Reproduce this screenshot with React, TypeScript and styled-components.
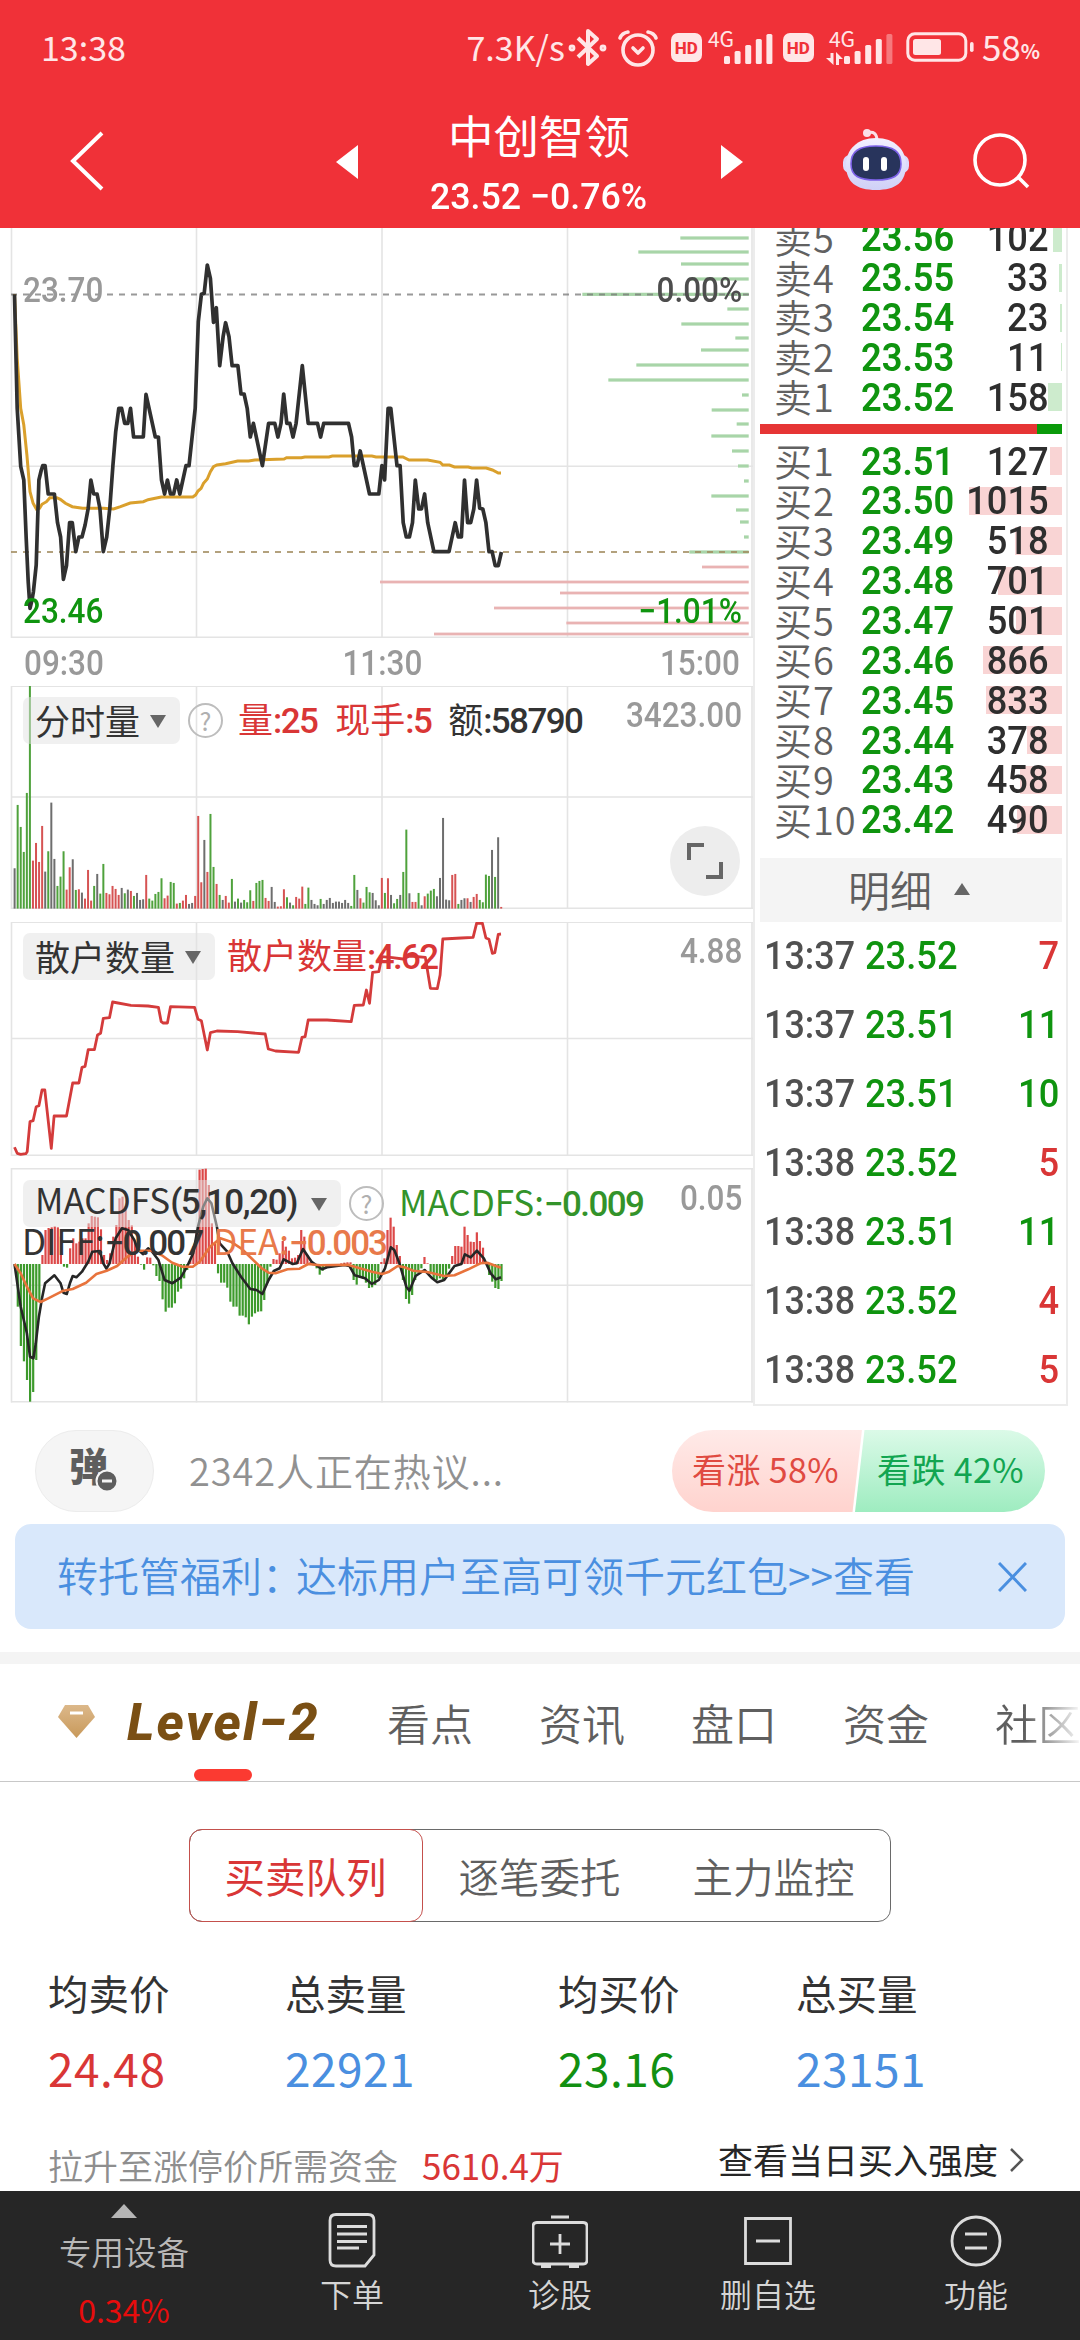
import React from "react";
import styled, { createGlobalStyle } from "styled-components";

const cjk = `"Noto Sans CJK SC", sans-serif`;
const din = `Roboto, "Noto Sans CJK SC", sans-serif`;
const RED = "#d93636";
const GREEN = "#0f940f";
const GRID = "#e4e4e4";

const Global = createGlobalStyle`
  html, body { margin: 0; padding: 0; background: #fff; }
  * { box-sizing: border-box; }
  #root { font-family: ${cjk}; line-height: 1; }
`;

const Page = styled.div`
  width: 1080px;
  height: 2340px;
  display: flex;
  flex-direction: column;
  background: #fff;
  overflow: hidden;
  white-space: nowrap;
`;

const Din = styled.span<{ $size?: number; $color?: string; $weight?: number; $sx?: number; $from?: string }>`
  display: inline-block;
  font-family: ${din};
  font-size: ${(p) => p.$size ?? 35}px;
  font-weight: ${(p) => p.$weight ?? 500};
  color: ${(p) => p.$color ?? "#999"};
  transform: scaleX(${(p) => p.$sx ?? 0.9});
  transform-origin: ${(p) => p.$from ?? "left"} center;
`;

/* ---------- header ---------- */
const Header = styled.header`
  flex: none;
  height: 228px;
  background: #f03138;
  color: #fff;
`;
const StatusBar = styled.div`
  height: 98px;
  padding: 0 40px 0 41px;
  display: flex;
  align-items: center;
  color: #ffe6e7;
  font-size: 34px;
`;
const StatusText = styled.span<{ $ml?: string; $size?: number; $top?: number; $weight?: number }>`
  margin-left: ${(p) => p.$ml ?? "0"};
  margin-top: ${(p) => p.$top ?? -5}px;
  font-size: ${(p) => p.$size ?? 34}px;
  font-weight: ${(p) => p.$weight ?? 400};
`;
const StatusIcon = styled.svg<{ $ml: number }>`
  flex: none;
  margin-left: ${(p) => p.$ml}px;
  overflow: visible;
`;
const Nav = styled.div`
  height: 130px;
  display: grid;
  grid-template-columns: 71px 265px 95px 216px 74px 121px 133px 105px;
`;
const NavCell = styled.div<{ $top: number }>`
  padding-top: ${(p) => p.$top}px;
  svg { display: block; overflow: visible; }
`;
const TitleBlock = styled.div`
  display: flex;
  flex-direction: column;
  align-items: center;
`;
const Title = styled.h1`
  margin: 13px 0 0;
  font-size: 45.5px;
  font-weight: 400;
  line-height: 46px;
`;
const SubTitle = styled.div`
  margin-top: 21px;
`;

function Signal({ faded }: { faded?: boolean }) {
  return (
    <g fill="#ffe6e7">
      {[8, 13, 19, 25, 30].map((h, i) => (
        <rect key={h} x={i * 10.6} y={30 - h} width="6" height={h} rx="1.6" opacity={faded && i === 4 ? 0.4 : 1} />
      ))}
    </g>
  );
}

const HdBadge = styled.span<{ $ml: number }>`
  flex: none;
  margin-left: ${(p) => p.$ml}px;
  width: 31px;
  height: 29px;
  margin-top: -3px;
  border-radius: 7px;
  background: #ffe6e7;
  color: #f03138;
  font: 800 17px/30px Roboto, sans-serif;
  text-align: center;
`;
const Cell = styled.span<{ $ml: number; $w: number }>`
  flex: none;
  display: flex;
  flex-direction: column;
  width: ${(p) => p.$w}px;
  height: 36px;
  margin: -4px 0 0 ${(p) => p.$ml}px;
  font: 400 21px/18px ${cjk};
`;
const CellRow = styled.svg`
  overflow: visible;
  align-self: flex-end;
  margin-top: -13px;
`;

function Status() {
  return (
    <StatusBar>
      <StatusText>13:38</StatusText>
      <StatusText $ml="auto">7.3K/s</StatusText>
      <StatusIcon $ml={4} width="37" height="40" viewBox="0 0 37 40" fill="none" stroke="#ffe6e7" strokeWidth="4" strokeLinejoin="round">
        <path d="M8 10 L27 28 L18 36 V3 L27 11 L8 29" transform="translate(1,-1)" />
        <circle cx="3" cy="19" r="1.4" />
        <circle cx="34" cy="19" r="1.4" />
      </StatusIcon>
      <StatusIcon $ml={12} width="40" height="38" viewBox="0 0 40 38" fill="none" stroke="#ffe6e7" strokeWidth="3.6" strokeLinecap="round" strokeLinejoin="round">
        <circle cx="20" cy="20" r="15" />
        <path d="M2 8 Q4 3 10 2 M38 8 Q36 3 30 2 M15 18 L20 23 L25 18" />
      </StatusIcon>
      <HdBadge $ml={13}>HD</HdBadge>
      <Cell $ml={6} $w={64}>
        4G
        <CellRow width="48" height="30"><Signal /></CellRow>
      </Cell>
      <HdBadge $ml={11}>HD</HdBadge>
      <Cell $ml={15} $w={63}>
        4G
        <CellRow width="48" height="30">
          <g fill="#ffe6e7">
            <path d="M-13.500 19H-10.500V31L-18 24H-13.500ZM-8 31H-5V25H-1L-8 18Z" />
          </g>
          <Signal faded />
        </CellRow>
      </Cell>
      <StatusIcon $ml={14} width="69" height="30" viewBox="0 0 69 30" style={{ marginTop: -4 }}>
        <rect x="1.8" y="1.8" width="58" height="26.4" rx="7" fill="none" stroke="#ffe6e7" strokeWidth="3" />
        <rect x="7" y="7" width="28" height="16" rx="2.5" fill="#ffe6e7" />
        <rect x="64" y="10" width="3.6" height="10" rx="1.8" fill="#ffe6e7" />
      </StatusIcon>
      <StatusText $ml="7px" $top={-7} $size={35}>58</StatusText>
      <StatusText $size={20} $top={3} $weight={700}>%</StatusText>
    </StatusBar>
  );
}

function Robot() {
  return (
    <svg width="68" height="64" viewBox="0 0 68 64">
      <defs>
        <linearGradient id="shell" x1="0" y1="0" x2="0" y2="1">
          <stop offset="0" stopColor="#f3f0ff" />
          <stop offset="1" stopColor="#cfd0f7" />
        </linearGradient>
      </defs>
      <path d="M25 5 Q35 2 35 13" fill="none" stroke="#fbdfe8" strokeWidth="3" />
      <circle cx="25" cy="5" r="4" fill="#fbdfe8" />
      <rect x="1" y="27" width="66" height="18" rx="7" fill="#dcd9fb" />
      <path d="M34 10 C53 10 64 22 64 37 C64 54 54 62 34 62 C14 62 4 54 4 37 C4 22 15 10 34 10Z" fill="url(#shell)" />
      <path d="M34 18 C52 18 59 24 59 36 C59 48 51 52 34 52 C17 52 9 48 9 36 C9 24 16 18 34 18Z" fill="#28345c" stroke="#7d62e8" strokeWidth="1.6" />
      <rect x="21" y="29" width="6" height="14" rx="3" fill="#fff" />
      <rect x="39" y="29" width="6" height="14" rx="3" fill="#fff" />
    </svg>
  );
}

/* ---------- charts ---------- */
const Main = styled.section`
  flex: none;
  height: 1178px;
  display: grid;
  grid-template-columns: 753px 327px;
  overflow: hidden;
`;
const Charts = styled.div`
  display: flex;
  flex-direction: column;
`;
const Panel = styled.div<{ $h: number; $mb?: number }>`
  position: relative;
  flex: none;
  height: ${(p) => p.$h}px;
  margin-bottom: ${(p) => p.$mb ?? 0}px;
`;
const Canvas = styled.svg`
  position: absolute;
  inset: 0;
`;
const Corners = styled.div`
  position: relative;
  height: 100%;
  padding: 45px 11px 9px 23px;
  display: flex;
  flex-direction: column;
  justify-content: space-between;
`;
const Spread = styled.div`
  display: flex;
  justify-content: space-between;
`;
const TimeAxis = styled.div`
  flex: none;
  height: 48px;
  padding: 3px 13px 0 24px;
  display: flex;
  justify-content: space-between;
  align-items: center;
`;
const Legend = styled.div<{ $top: number }>`
  position: relative;
  display: flex;
  align-items: center;
  height: 47px;
  padding: 0 11px 0 23px;
  top: ${(p) => p.$top}px;
`;
const Chip = styled.div<{ $w: number }>`
  flex: none;
  width: ${(p) => p.$w}px;
  height: 47px;
  padding: 0 14px 3px 12px;
  border-radius: 7px;
  background: rgba(226, 226, 226, 0.5);
  display: flex;
  align-items: center;
  justify-content: space-between;
  font-size: 35px;
  color: #333;
`;
const Down = styled.i`
  margin-top: 4px;
  border: 8.5px solid transparent;
  border-top: 13px solid #666;
  border-bottom: 0;
`;
const Help = styled.span`
  flex: none;
  width: 35px;
  height: 35px;
  margin-left: 8px;
  border: 2.5px solid #bdbdbd;
  border-radius: 50%;
  color: #b0b0b0;
  font: 400 25px/30px ${cjk};
  text-align: center;
`;
const Item = styled.span<{ $c: string; $ml: number; $ls?: number; $w?: number }>`
  margin-left: ${(p) => p.$ml}px;
  margin-top: -3px;
  font-family: ${din};
  font-weight: ${(p) => p.$w ?? 500};
  font-size: 35px;
  letter-spacing: ${(p) => p.$ls ?? -1.6}px;
  color: ${(p) => p.$c};
`;
const Cn = styled.span`
  font-family: ${cjk};
  font-weight: 400;
  letter-spacing: 0;
`;
const Max = styled.span`
  margin: -10px 0 0 auto;
`;
const Readout = styled.div`
  position: relative;
  top: 10px;
  padding-left: 22px;
  display: flex;
`;
const Expand = styled.div`
  position: absolute;
  left: 670px;
  top: 140px;
  width: 70px;
  height: 70px;
  border-radius: 50%;
  background: #ededed;
`;

type Pt = [number, number];
const parse = (s: string): Pt[] => s.trim().split(/\s+/).map((p) => p.split(",").map(Number) as Pt);
const path = (s: string, oy: number) =>
  parse(s).map(([x, y]) => `${(x / 2.904).toFixed(1)},${(oy + y / 3).toFixed(1)}`).join(" ");

const price = `42,208 50,550 60,724 69,765 76,940 82,1070 87,1150 93,1125 97,1100 105,1020 113,765 120,735 124,722 131,722 140,807 158,807 167,893 176,936 184,1063 193,1022 202,893 210,893 220,980 229,936 238,936 247,900 256,850 264,765 272,807 282,807 290,850 300,980 310,936 319,850 328,722 336,620 345,550 353,550 362,595 371,595 379,550 388,636 416,636 424,508 451,636 460,636 469,765 478,807 486,765 495,807 504,807 513,765 522,807 540,722 549,722 567,550 576,290 585,208 593,205 602,120 611,160 620,292 628,248 638,422 648,335 655,293 665,335 674,422 691,422 700,507 709,507 718,550 727,636 736,595 762,722 780,595 798,595 807,636 816,595 824,507 833,595 842,595 851,636 860,595 878,422 895,595 922,595 931,636 940,595 1012,595 1021,636 1029,722 1037,722 1046,678 1073,807 1100,807 1109,722 1117,765 1127,550 1135,550 1153,722 1162,722 1171,893 1180,936 1189,936 1198,893 1206,765 1216,852 1224,852 1233,807 1242,893 1260,980 1304,980 1322,893 1331,936 1340,936 1349,765 1358,893 1367,893 1376,852 1384,765 1393,850 1402,852 1411,893 1420,980 1429,980 1438,1022 1447,1022 1456,981`;
const average = `42,208 50,400 60,550 69,600 78,690 87,800 96,835 106,853 115,850 122,838 135,830 145,818 165,818 175,823 190,835 210,845 240,850 300,850 330,852 350,845 378,834 416,830 430,824 468,816 560,816 568,810 575,798 584,790 591,775 602,762 611,740 620,725 630,720 655,716 690,708 722,708 740,705 825,702 832,698 875,698 885,696 955,696 965,693 1080,693 1092,696 1170,696 1188,705 1242,705 1278,712 1286,720 1305,720 1320,726 1360,726 1370,729 1412,729 1430,735 1447,744 1455,744`;
const depthGreen = `961,39 835,81 963,117 988,162 667,208 1102,252 964,297 1126,339 1023,375 829,420 745,465 1146,510 1055,555 1130,597 1054,633 1116,678 1134,723 1152,768 1054,813 1128,855 1140,891 1152,936 988,981`;
const depthRed = `1026,1026 60,1071 600,1104 402,1149 619,1194 222,1227`;
const volume = `K595 G405 G471 G546 G369 G45 R572 R519 R576 R468 K605 G544 K398 K567 G648 G620 G544 R659 R592 K568 G660 R658 K668 R686 R600 R692 G648 K612 G671 G582 R669 R673 R648 R657 R675 K654 G670 K659 R663 G678 K669 K690 K688 R615 G686 G692 G672 G666 G625 R685 R677 G636 G639 R701 G699 R692 R675 K702 K699 R678 R438 R637 K510 R606 G432 G591 R642 G675 K690 R678 R698 G627 K695 G686 K698 G690 G697 G661 R693 G639 G633 G630 R684 R693 K651 K696 R710 R709 R658 G682 K698 G706 R681 R686 R650 G702 G653 K690 K702 K706 G687 K702 K690 K684 K699 K695 K695 K699 K690 K699 G708 G615 K660 R685 G698 G651 G667 K669 K691 K706 R624 G669 R625 K675 G700 G687 K675 G606 G479 K670 R696 R696 G669 K706 R679 G671 G662 G657 K679 K624 K444 K689 K691 R615 R612 G702 K690 K685 R685 K696 R681 R672 G690 G697 G614 G618 K540 G621 K502 R711`.split(" ");
const retail = `42,712 50,730 60,733 75,731 79,725 87,635 96,632 105,590 113,587 122,540 130,540 149,715 157,618 193,618 211,519 229,519 238,472 247,469 256,419 274,419 283,375 292,370 300,325 318,323 327,276 380,286 430,288 460,292 468,335 474,339 486,339 495,290 565,292 575,328 585,332 602,420 611,368 630,363 690,365 770,372 779,417 800,423 867,427 877,382 886,380 895,330 950,330 1020,335 1029,286 1055,285 1064,240 1073,280 1082,187 1100,185 1109,140 1140,143 1170,147 1190,138 1235,142 1250,235 1270,236 1278,195 1286,87 1340,84 1374,82 1384,40 1401,40 1411,84 1420,88 1430,130 1437,128 1447,73 1455,72`;
const macd = `1062 1190 1308 1354 1410 1475 1446 1350 1175 1035 960 954 952 949 952 980 1070 1073 1015 985 1000 995 985 985 940 918 920 922 958 1035 1050 1030 980 945 865 860 890 930 946 995 1040 1064 1079 1042 1043 1066 1098 1113 1168 1205 1193 1193 1180 1145 1136 1105 1080 1048 1008 960 779 777 776 825 940 1000 1090 1118 1118 1133 1175 1190 1190 1217 1217 1222 1243 1220 1210 1205 1204 1170 1118 1070 1047 1049 1030 993 1010 1022 1045 1043 1035 960 980 1035 1056 1066 1075 1094 1082 1075 1072 1066 1066 1064 1060 1058 1057 1057 1110 1124 1102 1106 1118 1134 1132 1125 1105 1056 1045 960 923 950 1005 1038 1110 1167 1181 1155 1110 1088 1075 1041 1060 1090 1108 1110 1105 1108 1095 1076 1038 1008 1008 1010 950 975 995 996 967 993 1013 1058 1095 1115 1134 1137 1113`.split(" ").map(Number);
const diff = `42,1062 60,1190 78,1270 87,1340 97,1345 104,1300 113,1220 122,1165 131,1120 158,1096 176,1120 184,1148 194,1152 203,1120 211,1098 222,1102 238,1085 256,1055 268,1025 290,1023 300,1060 309,1076 318,1060 336,985 354,955 372,960 390,990 400,1018 415,1032 430,1015 442,1025 460,1050 478,1110 500,1120 525,1103 543,1070 561,1030 575,950 590,890 602,865 614,880 630,950 638,1000 660,1025 675,1060 700,1100 727,1137 745,1140 762,1152 780,1110 795,1083 812,1075 824,1048 850,1062 862,1060 880,1017 895,1040 905,1055 935,1078 950,1072 1000,1065 1015,1068 1030,1096 1060,1105 1080,1122 1100,1110 1118,1075 1135,1012 1145,1020 1160,1060 1180,1130 1189,1142 1207,1098 1233,1080 1255,1105 1270,1117 1290,1110 1320,1068 1340,1062 1350,1033 1367,1042 1385,1022 1405,1045 1425,1090 1440,1108 1455,1102`;
const dea = `42,1062 60,1090 78,1130 96,1165 118,1176 140,1165 184,1142 211,1137 250,1118 280,1092 310,1082 340,1068 370,1040 400,1022 440,1022 470,1036 500,1058 530,1070 560,1070 580,1055 610,1010 640,985 670,995 700,1015 730,1045 760,1075 780,1088 800,1090 835,1078 870,1076 895,1062 930,1066 1010,1064 1040,1073 1080,1085 1110,1092 1130,1085 1155,1068 1175,1072 1200,1082 1240,1086 1290,1098 1320,1096 1360,1078 1395,1060 1415,1058 1440,1068 1455,1073`;
const tone: Record<string, string> = { K: "#6e6e6e", G: "#4fa23c", R: "#d65353" };

function Grid({ top, bottom, mid, open }: { top: number; bottom: number; mid: number; open?: boolean }) {
  return (
    <g stroke={GRID} strokeWidth="1.6" fill="none">
      {[11.5, 196.5, 382, 567.5, 752].map((x) => (
        <path key={x} d={`M${x} ${top}V${bottom}`} />
      ))}
      {!open && <path d={`M11 ${top + 0.8}H753`} />}
      <path d={`M11 ${mid}H753M11 ${bottom - 0.8}H753`} />
    </g>
  );
}

function PricePanel() {
  return (
    <Panel $h={410}>
      <Canvas width="753" height="410" viewBox="0 228 753 410">
        <Grid top={228} bottom={638} mid={466.3} open />
        {parse(depthGreen).map(([x, y]) => (
          <rect key={y} x={360 + x / 3} y={223.4 + y / 3} width={388.7 - x / 3} height="3.2" fill="#a8d5a8" />
        ))}
        {parse(depthRed).map(([x, y]) => (
          <rect key={y} x={360 + x / 3} y={223.6 + y / 3} width={388.7 - x / 3} height="2.8" fill="#e9b3b3" />
        ))}
        <path d="M11 294.5H749" stroke="#777" strokeOpacity="0.75" strokeWidth="1.8" strokeDasharray="6 6" />
        <path d="M11 552H749" stroke="#a08a5c" strokeOpacity="0.8" strokeWidth="1.8" strokeDasharray="6 6" />
        <polyline points={path(average, 225)} fill="none" stroke="#daa02c" strokeWidth="3" />
        <polyline points={path(price, 225)} fill="none" stroke="#303030" strokeWidth="3.7" strokeLinejoin="round" />
      </Canvas>
      <Corners>
        <Spread>
          <Din>23.70</Din>
          <Din $color="#4d4d4d" $from="right">0.00%</Din>
        </Spread>
        <Spread>
          <Din $color={GREEN}>23.46</Din>
          <Din $color={GREEN} $from="right">−1.01%</Din>
        </Spread>
      </Corners>
    </Panel>
  );
}

function VolumePanel() {
  const pitch = 486.6 / (volume.length - 1);
  return (
    <Panel $h={223} $mb={13}>
      <Canvas width="753" height="223" viewBox="0 686 753 223">
        <Grid top={685.5} bottom={909} mid={797} />
        {volume.map((b, i) => {
          const h = (716 - Number(b.slice(1))) / 3;
          return <rect key={i} x={13.6 + i * pitch} y={908.6 - h} width="2" height={h} fill={tone[b[0]]} />;
        })}
      </Canvas>
      <Legend $top={11}>
        <Chip $w={157}>分时量<Down /></Chip>
        <Help>?</Help>
        <Item $c={RED} $ml={15}><Cn>量</Cn>:25</Item>
        <Item $c={RED} $ml={18}><Cn>现手</Cn>:5</Item>
        <Item $c="#333" $ml={17}><Cn>额</Cn>:58790</Item>
        <Max><Din $from="right">3423.00</Din></Max>
      </Legend>
      <Expand>
        <svg width="70" height="70" fill="none" stroke="#666" strokeWidth="4">
          <path d="M19 34V19H34M51 36V51H36" />
        </svg>
      </Expand>
    </Panel>
  );
}

function RetailPanel() {
  return (
    <Panel $h={234} $mb={12}>
      <Canvas width="753" height="234" viewBox="0 922 753 234">
        <Grid top={921.5} bottom={1156} mid={1038.5} />
        <polyline points={path(retail, 910)} fill="none" stroke="#d43b3b" strokeWidth="2.8" strokeLinejoin="round" />
      </Canvas>
      <Legend $top={11}>
        <Chip $w={192}>散户数量<Down /></Chip>
        <Item $c={RED} $ml={12}><Cn>散户数量</Cn>:4.62</Item>
        <Max><Din $from="right">4.88</Din></Max>
      </Legend>
    </Panel>
  );
}

function MacdPanel() {
  const pitch = 486.8 / (macd.length - 1);
  return (
    <Panel $h={234}>
      <Canvas width="753" height="235" viewBox="0 1168 753 235">
        <Grid top={1168} bottom={1402.5} mid={1285.3} />
        {macd.map((v, i) => {
          const up = v < 1062;
          const h = Math.abs(v - 1062) / 3;
          return <rect key={i} x={13.6 + i * pitch} y={up ? 1264 - h : 1264} width="2.2" height={h} fill={up ? "#dc4848" : "#3d9a2c"} />;
        })}
        <polyline points={path(diff, 910)} fill="none" stroke="#262626" strokeWidth="2.6" strokeLinejoin="round" />
        <polyline points={path(dea, 910)} fill="none" stroke="#e8733c" strokeWidth="2.6" strokeLinejoin="round" />
      </Canvas>
      <Legend $top={12}>
        <Chip $w={318}>
          <Item $c="#333" $ml={0} $ls={-1.4}><Cn>MACDFS</Cn>(5,10,20)</Item>
          <Down />
        </Chip>
        <Help>?</Help>
        <Item $c="#33932a" $ml={15}><Cn>MACDFS:</Cn>−0.009</Item>
        <Max><Din $from="right">0.05</Din></Max>
      </Legend>
      <Readout>
        <Item $c="#333" $ml={0} $ls={-1.9}><Cn>DIFF:</Cn>−0.007</Item>
        <Item $c="#e8794a" $ml={11} $ls={-2}><Cn>DEA:</Cn>−0.003</Item>
      </Readout>
    </Panel>
  );
}

/* ---------- order book ---------- */
const Book = styled.aside`
  width: 315px;
  height: 1178px;
  padding: 0 4px 0 5px;
  border: solid #ececec;
  border-width: 0 2px 2px 2px;
  display: flex;
  flex-direction: column;
  overflow: hidden;
`;
const Level = styled.div`
  position: relative;
  flex: none;
  height: 39.85px;
  display: grid;
  grid-template-columns: 86px 100px 1fr;
  align-items: center;
  padding: 0 14px 0 14px;
`;
const LevelName = styled.span`
  position: relative;
  top: -2px;
  font-size: 38px;
  font-weight: 350;
  letter-spacing: 0.9px;
  color: #616161;
`;
const Price = styled.span`
  padding-left: 1px;
`;
const Qty = styled.span`
  position: relative;
  text-align: right;
`;
const DepthBar = styled.i<{ $c: string }>`
  position: absolute;
  right: 0;
  top: 5px;
  height: 28px;
  background: ${(p) => p.$c};
`;
const Ratio = styled.div`
  flex: none;
  height: 10.5px;
  margin: 5.7px 0 8px;
  display: flex;
  background: #0a9a0a;
`;
const RatioRed = styled.div`
  width: 277px;
  background: #e63535;
`;
const DetailHead = styled.div`
  flex: none;
  height: 64px;
  margin: 17px 0 0;
  background: #f4f4f4;
  display: flex;
  align-items: center;
  padding: 0 0 2px 88px;
  font-size: 42px;
  font-weight: 350;
  color: #5f5f5f;
`;
const Up = styled.i<{ $c: string; $w: number; $h: number }>`
  width: 0;
  height: 0;
  border: ${(p) => p.$w}px solid transparent;
  border-top: 0;
  border-bottom: ${(p) => p.$h}px solid ${(p) => p.$c};
`;
const Tick = styled.div`
  flex: none;
  height: 69.05px;
  padding: 0 3px 0 4px;
  display: grid;
  grid-template-columns: 101px 100px 1fr;
  align-items: center;
`;

const asks: [string, string, number][] = [
  ["卖5", "23.56", 102], ["卖4", "23.55", 33], ["卖3", "23.54", 23], ["卖2", "23.53", 11], ["卖1", "23.52", 158],
];
const bids: [string, string, number][] = [
  ["买1", "23.51", 127], ["买2", "23.50", 1015], ["买3", "23.49", 518], ["买4", "23.48", 701], ["买5", "23.47", 501],
  ["买6", "23.46", 866], ["买7", "23.45", 833], ["买8", "23.44", 378], ["买9", "23.43", 458], ["买10", "23.42", 490],
];
const ticks: [string, string, number, string][] = [
  ["13:37", "23.52", 7, RED], ["13:37", "23.51", 11, GREEN], ["13:37", "23.51", 10, GREEN], ["13:38", "23.52", 5, RED],
  ["13:38", "23.51", 11, GREEN], ["13:38", "23.52", 4, RED], ["13:38", "23.52", 5, RED],
];

function LevelRow({ row, bar }: { row: [string, string, number]; bar: string }) {
  return (
    <Level>
      <DepthBar $c={bar} style={{ width: row[2] * 0.0917 }} />
      <LevelName>{row[0]}</LevelName>
      <Price><Din $size={39} $color={GREEN} $sx={0.93} $weight={600}>{row[1]}</Din></Price>
      <Qty><Din $size={39} $color="#2e2e2e" $sx={0.93} $from="right">{row[2]}</Din></Qty>
    </Level>
  );
}

const BookInner = styled.div`
  display: flex;
  flex-direction: column;
  margin-top: -9.2px;
`;

function OrderBook() {
  return (
    <Book>
      <BookInner>
        {asks.map((r) => <LevelRow key={r[0]} row={r} bar="#cdebcd" />)}
        <Ratio><RatioRed /></Ratio>
        {bids.map((r) => <LevelRow key={r[0]} row={r} bar="#f9d4d4" />)}
        <DetailHead>明细<Up $c="#666" $w={8.5} $h={12} style={{ marginLeft: 22 }} /></DetailHead>
        {ticks.map(([t, p, v, c], i) => (
          <Tick key={i}>
            <Din $size={39} $color="#505050" $sx={0.92}>{t}</Din>
            <Din $size={39} $color={GREEN} $sx={0.93}>{p}</Din>
            <Qty><Din $size={39} $color={c} $sx={0.93} $from="right">{v}</Din></Qty>
          </Tick>
        ))}
      </BookInner>
    </Book>
  );
}

/* ---------- chat and banner ---------- */
const ChatRow = styled.div`
  flex: none;
  height: 118px;
  padding: 24px 35px 12px;
  display: flex;
  align-items: center;
`;
const Bullet = styled.div`
  position: relative;
  width: 119px;
  height: 82px;
  border-radius: 41px;
  border: 1px solid #ececec;
  background: #f5f5f5;
  padding: 14px 0 0 33px;
  font-size: 39px;
  font-weight: 900;
  color: #5e5e5e;
  svg { position: absolute; left: 59px; top: 38px; }
`;
const Talk = styled.span`
  margin: -3px auto 0 35px;
  font-size: 38px;
  font-weight: 350;
  letter-spacing: 0.9px;
  color: #919191;
`;
const Vote = styled.div<{ $up?: boolean }>`
  width: 190px;
  height: 82px;
  margin-left: ${(p) => (p.$up ? 0 : -7)}px;
  padding: ${(p) => (p.$up ? "0 0 4px 20px" : "0 0 4px 22px")};
  display: flex;
  align-items: center;
  font-size: 34px;
  letter-spacing: 0.4px;
  color: ${(p) => (p.$up ? "#e04a41" : "#12a551")};
  background: ${(p) => (p.$up ? "linear-gradient(#ffeae8, #ffd3ce)" : "linear-gradient(#dbfae8, #9eecc0)")};
  border-radius: ${(p) => (p.$up ? "41px 0 0 41px" : "0 41px 41px 0")};
  clip-path: ${(p) => (p.$up ? "polygon(0 0, 100% 0, 95% 100%, 0 100%)" : "polygon(5% 0, 100% 0, 100% 100%, 0 100%)")};
`;
const Banner = styled.div`
  flex: none;
  height: 105px;
  margin: 0 15px 23px;
  padding: 0 38px 4px 42px;
  border-radius: 16px;
  background: #d9e8fb;
  display: flex;
  align-items: center;
  justify-content: space-between;
  font-size: 41px;
  font-weight: 350;
  color: #4a8fe0;
`;
const Colon = styled.span`
  letter-spacing: -7px;
`;
const Divider = styled.div`
  flex: none;
  height: 12px;
  background: #f4f4f4;
`;

/* ---------- tabs ---------- */
const Tabs = styled.nav`
  flex: none;
  position: relative;
  height: 118px;
  border-bottom: 1.5px solid #c8c8c8;
  display: flex;
  align-items: center;
  padding-left: 57px;
`;
const Gem = styled.svg`
  flex: none;
  margin-top: -3px;
`;
const LevelTab = styled.div`
  flex: none;
  width: 260px;
  margin-left: 31px;
  font: italic 800 52px/60px Roboto, sans-serif;
  letter-spacing: 2.2px;
  color: #7a4f14;
`;
const Indicator = styled.i`
  position: absolute;
  left: 194px;
  bottom: 0;
  width: 58px;
  height: 12px;
  border-radius: 6px;
  background: #fb3a31;
`;
const Tab = styled.div<{ $fade?: boolean }>`
  flex: none;
  width: 152px;
  margin-top: -2px;
  line-height: 60px;
  font-size: 43px;
  font-weight: 350;
  color: #5f5f5f;
  ${(p) => p.$fade && "background: linear-gradient(90deg, #5f5f5f 30px, #fff 88px); background-clip: text; -webkit-background-clip: text; color: transparent;"}
`;
const Segments = styled.div`
  flex: none;
  width: 702px;
  height: 93px;
  margin: 47px auto 0 189px;
  border: 1.5px solid #6a6a6a;
  border-radius: 13px;
  display: flex;
`;
const Segment = styled.div<{ $on?: boolean }>`
  flex: none;
  width: 234px;
  height: 93px;
  margin: -1.5px 0 0 ${(p) => (p.$on ? -1.5 : 0)}px;
  border: 1.5px solid ${(p) => (p.$on ? "#c4504c" : "transparent")};
  border-radius: 13px;
  text-align: center;
  font-size: 40.5px;
  font-weight: ${(p) => (p.$on ? 400 : 350)};
  line-height: 91px;
  color: ${(p) => (p.$on ? RED : "#5f5f5f")};
`;

/* ---------- statistics ---------- */
const Stats = styled.div`
  flex: none;
  display: grid;
  grid-template-columns: 237px 273px 238px 1fr;
  padding: 51px 0 0 48px;
`;
const StatName = styled.div`
  font-size: 40.5px;
  color: #333;
`;
const StatValue = styled.div<{ $c: string }>`
  margin-top: 30px;
  font-size: 46px;
  letter-spacing: 0.5px;
  color: ${(p) => p.$c};
`;
const Funds = styled.div`
  flex: 1;
  display: flex;
  align-items: flex-start;
  padding: 57px 56px 0 48px;
  font-size: 35px;
  font-weight: 350;
  color: #8e8e8e;
`;
const FundsValue = styled.span`
  margin-left: 24px;
  font-weight: 400;
  color: ${RED};
`;
const More = styled.span`
  margin: -6px 0 0 auto;
  display: flex;
  align-items: center;
  gap: 11px;
  font-weight: 400;
  color: #262626;
`;

/* ---------- bottom bar ---------- */
const Bottom = styled.footer`
  flex: none;
  height: 149px;
  background: #262626;
  display: grid;
  grid-template-columns: 248px repeat(4, 208px);
  color: #c9c9c9;
  font-size: 32px;
`;
const Sector = styled.div`
  display: flex;
  flex-direction: column;
  align-items: center;
  padding-top: 13px;
`;
const SectorName = styled.span`
  margin-top: 17px;
  color: #b8b8b8;
  font-weight: 350;
  font-size: 32.5px;
`;
const SectorRate = styled.span`
  margin-top: 25px;
  color: #e80c0c;
`;
const Action = styled.div`
  display: flex;
  flex-direction: column;
  align-items: center;
  padding-top: 22px;
  span { margin-top: 8px; font-weight: 350; color: #d5d5d5; }
`;

const actions = [
  { name: "下单", icon: <path d="M11 3.5H43Q49 3.5 49 9.500V44L40 55H11Q5 55 5 49V9.500Q5 3.500 11 3.500ZM12 15.500H42M12 23H42M12 30.500H42M12 37H34" transform="translate(1,-2)" /> },
  { name: "诊股", icon: <path d="M19 4H37M5 9.500H51Q55 9.500 55 13.500V47Q55 51 51 51H5Q1 51 1 47V13.500Q1 9.500 5 9.500ZM28 21V41M18 31H38M9 53.500H19M37 53.500H47" /> },
  { name: "删自选", icon: <path d="M5.500 5.500H50.500V50.500H5.500ZM16 28H40" /> },
  { name: "功能", icon: <g><circle cx="28" cy="28" r="24" /><path d="M17 21H39M17 35H39" /></g> },
];

const stats = [
  ["均卖价", "24.48", RED], ["总卖量", "22921", "#4a8fe0"], ["均买价", "23.16", "#129012"], ["总买量", "23151", "#4a8fe0"],
];

export default function App() {
  return (
    <Page>
      <Global />
      <Header>
        <Status />
        <Nav>
          <i />
          <NavCell $top={34}>
            <svg width="33" height="58" fill="none" stroke="#fff" strokeWidth="4"><path d="M31 1L2 29L31 57" /></svg>
          </NavCell>
          <NavCell $top={47}>
            <svg width="22" height="34" fill="#fff"><path d="M22 0V34L0 17Z" /></svg>
          </NavCell>
          <TitleBlock>
            <Title>中创智领</Title>
            <SubTitle><Din $size={37} $color="#fff" $sx={0.965} $from="center">23.52 −0.76%</Din></SubTitle>
          </TitleBlock>
          <i />
          <NavCell $top={47}>
            <svg width="22" height="34" fill="#fff"><path d="M0 0V34L22 17Z" /></svg>
          </NavCell>
          <NavCell $top={30}><Robot /></NavCell>
          <NavCell $top={36}>
            <svg width="56" height="56" fill="none" stroke="#fff" strokeWidth="3.6"><circle cx="25" cy="26" r="25" /><path d="M43 43L53 53" /></svg>
          </NavCell>
        </Nav>
      </Header>

      <Main>
        <Charts>
          <PricePanel />
          <TimeAxis>
            {["09:30", "11:30", "15:00"].map((t, i) => (
              <Din key={t} $from={["left", "center", "right"][i]}>{t}</Din>
            ))}
          </TimeAxis>
          <VolumePanel />
          <RetailPanel />
          <MacdPanel />
        </Charts>
        <OrderBook />
      </Main>

      <ChatRow>
        <Bullet>
          弹
          <svg width="24" height="24"><circle cx="12" cy="12" r="10.500" fill="#5e5e5e" stroke="#f5f5f5" strokeWidth="2" /><path d="M7 12H17" stroke="#f5f5f5" strokeWidth="3" /></svg>
        </Bullet>
        <Talk>2342人正在热议...</Talk>
        <Vote $up>看涨 58%</Vote>
        <Vote>看跌 42%</Vote>
      </ChatRow>
      <Banner>
        <span>转托管福利<Colon>：</Colon>达标用户至高可领千元红包&gt;&gt;查看</span>
        <svg width="29" height="30" fill="none" stroke="#4a8fe0" strokeWidth="3" style={{ marginTop: 4 }}><path d="M1 1L28 29M28 1L1 29" /></svg>
      </Banner>
      <Divider />

      <Tabs>
        <Gem width="39" height="35" viewBox="0 0 39 35">
          <defs>
            <linearGradient id="gem" x1="0" y1="0" x2="0" y2="1"><stop offset="0" stopColor="#dcb88a" /><stop offset="1" stopColor="#c8995a" /></linearGradient>
          </defs>
          <path d="M8 1H31L38 13L19.500 34L1 13Z" fill="url(#gem)" />
          <path d="M13 9H26" stroke="#fff" strokeWidth="3" />
        </Gem>
        <LevelTab>Level−2</LevelTab>
        {["看点", "资讯", "盘口", "资金"].map((t) => <Tab key={t}>{t}</Tab>)}
        <Tab $fade>社区</Tab>
        <Indicator />
      </Tabs>

      <Segments>
        <Segment $on>买卖队列</Segment>
        <Segment>逐笔委托</Segment>
        <Segment>主力监控</Segment>
      </Segments>

      <Stats>
        {stats.map(([n, v, c]) => (
          <div key={n}>
            <StatName>{n}</StatName>
            <StatValue $c={c}>{v}</StatValue>
          </div>
        ))}
      </Stats>
      <Funds>
        拉升至涨停价所需资金
        <FundsValue>5610.4万</FundsValue>
        <More>
          查看当日买入强度
          <svg width="15" height="24" fill="none" stroke="#555" strokeWidth="2.500" style={{ marginTop: 4 }}><path d="M2 1L13 12L2 23" /></svg>
        </More>
      </Funds>

      <Bottom>
        <Sector>
          <Up $c="#b5b5b5" $w={13} $h={14} />
          <SectorName>专用设备</SectorName>
          <SectorRate>0.34%</SectorRate>
        </Sector>
        {actions.map((a) => (
          <Action key={a.name}>
            <svg width="56" height="56" fill="none" stroke="#dcdcdc" strokeWidth="2.800">{a.icon}</svg>
            <span>{a.name}</span>
          </Action>
        ))}
      </Bottom>
    </Page>
  );
}
